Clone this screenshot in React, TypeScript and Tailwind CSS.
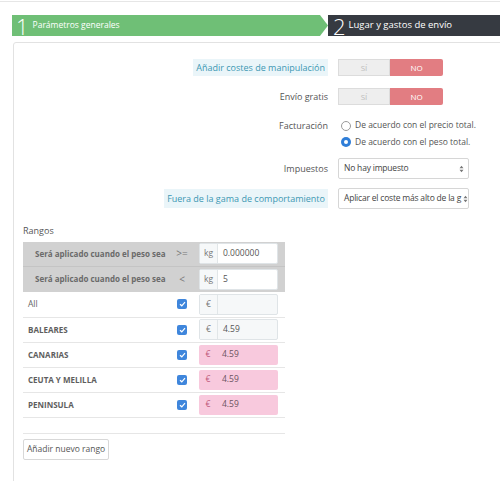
import React from 'react';

const zones = [
  { name: 'BALEARES', price: '4.59', pink: false },
  { name: 'CANARIAS', price: '4.59', pink: true },
  { name: 'CEUTA Y MELILLA', price: '4.59', pink: true },
  { name: 'PENINSULA', price: '4.59', pink: true },
];

function Toggle() {
  return (
    <div className="flex h-[17px] w-[105px] text-[8px]">
      <div className="flex w-[52px] items-center justify-center border border-[#dcdcdc] bg-[#eeeeee] text-[#bdbdbd]">SÍ</div>
      <div className="flex flex-1 items-center justify-center rounded-r-[2px] bg-[#e27d82] text-white">NO</div>
    </div>
  );
}

function Radio({ checked }: { checked?: boolean }) {
  return checked ? (
    <span className="flex h-[10px] w-[10px] items-center justify-center rounded-full bg-[#2f7ed8]">
      <span className="h-[4px] w-[4px] rounded-full bg-white" />
    </span>
  ) : (
    <span className="h-[10px] w-[10px] rounded-full border border-[#9a9a9a] bg-white" />
  );
}

function Select({ value }: { value: string }) {
  return (
    <div className="flex h-[21px] w-[131px] items-center overflow-hidden rounded-[2px] border border-[#d6d6d6] bg-white pl-[5px] pr-[4px] text-[8.5px] text-[#444]">
      <span className="flex-1 whitespace-nowrap tracking-[-0.2px]">{value}</span>
      <svg width="5" height="8" viewBox="0 0 5 8" className="ml-[2px] shrink-0">
        <path d="M0.5 3.2 L2.5 0.8 L4.5 3.2 Z M0.5 4.8 L2.5 7.2 L4.5 4.8 Z" fill="#777" />
      </svg>
    </div>
  );
}

function InputGroup({ unit, value, pink, bg = 'bg-white' }: { unit: string; value: string; pink?: boolean; bg?: string }) {
  if (pink) {
    return (
      <div className="flex h-[20px] w-[79px] items-center rounded-[2px] bg-[#f8c9dd] text-[8.5px]">
        <span className="w-[18px] text-center text-[#c05a7c]">{unit}</span>
        <span className="pl-[5px] text-[#6b5360]">{value}</span>
      </div>
    );
  }
  return (
    <div className={`flex h-[21px] w-[79px] items-stretch rounded-[2px] border border-[#dfe4e7] ${bg} text-[8.5px]`}>
      <span className="flex w-[18px] items-center justify-center border-r border-[#e1e6e8] bg-[#f6f8f9] text-[#777]">{unit}</span>
      <span className="flex items-center pl-[5px] text-[#555]">{value}</span>
    </div>
  );
}

function Check() {
  return (
    <span className="flex h-[10px] w-[10px] items-center justify-center rounded-[2px] bg-[#3f86dc]">
      <svg width="7" height="6" viewBox="0 0 7 6">
        <path d="M1 3.2 L2.8 4.8 L6 1.2" stroke="white" strokeWidth="1.2" fill="none" />
      </svg>
    </span>
  );
}

export default function App() {
  return (
    <div className="relative h-[481px] w-[500px] overflow-hidden bg-white font-['Open_Sans',sans-serif]">
      <div className="mt-[1px] h-[1px] bg-[#e6e6e6]" />

      {/* Steps */}
      <div className="ml-[12px] mt-[13px] flex h-[21px]">
        <div className="flex w-[308px] items-center bg-[#6fbf76] pl-[4px] text-white">
          <span className="text-[22px] font-light leading-none">1</span>
          <span className="ml-[4px] text-[8.5px]">Parámetros generales</span>
        </div>
        <svg width="8" height="21" viewBox="0 0 8 21" className="shrink-0">
          <path d="M0 0 L8 10.5 L0 21 Z" fill="#6fbf76" />
        </svg>
        <div className="flex flex-1 items-center bg-[#363a41] pl-[5px] text-white">
          <span className="text-[22px] font-light leading-none">2</span>
          <span className="ml-[3px] text-[9.5px]">Lugar y gastos de envío</span>
        </div>
      </div>

      {/* Card */}
      <div className="ml-[13px] mt-[6px] h-[520px] w-[520px] rounded-[3px] border border-[#e2e2e2] pt-[16px]">
        <div className="grid grid-cols-[314px_1fr] items-center gap-x-[10px] text-[9px] text-[#555]">
          <div className="flex justify-end">
            <span className="flex h-[17px] items-center bg-[#eaf5f9] px-[3px] text-[#3d98b3]">Añadir costes de manipulación</span>
          </div>
          <Toggle />

          <div className="mt-[12px] text-right">Envío gratis</div>
          <div className="mt-[12px]"><Toggle /></div>

          <div className="mt-[14px] text-right">Facturación</div>
          <div className="mt-[14px] flex items-center gap-[4px] pl-[3px] text-[8.5px]">
            <Radio />
            <span>De acuerdo con el precio total.</span>
          </div>
          <div />
          <div className="mt-[3px] flex items-center gap-[4px] pl-[3px] text-[8.5px]">
            <Radio checked />
            <span>De acuerdo con el peso total.</span>
          </div>

          <div className="mt-[10px] text-right">Impuestos</div>
          <div className="mt-[10px]"><Select value="No hay impuesto" /></div>

          <div className="mt-[9px] flex justify-end">
            <span className="flex h-[19px] items-center bg-[#eaf5f9] px-[3px] text-[#3d98b3]">Fuera de la gama de comportamiento</span>
          </div>
          <div className="mt-[9px]"><Select value="Aplicar el coste más alto de la g" /></div>
        </div>

        {/* Rangos */}
        <div className="ml-[9px] mt-[15px] w-[262px]">
          <div className="text-[9px] text-[#555]">Rangos</div>
          <div className="mt-[4px] bg-[#d1d1d1]">
            {[
              { op: '>=', value: '0.000000' },
              { op: '<', value: '5' },
            ].map((r, i) => (
              <div key={i} className={`grid h-[25px] grid-cols-[147px_24px_5px_79px] items-center ${i === 0 ? 'border-b border-[#c4c4c4]' : ''}`}>
                <span className="whitespace-nowrap pl-[12px] text-[8px] font-bold text-[#6a6a6a]">Será aplicado cuando el peso sea</span>
                <span className="text-center text-[10px] text-[#777]">{r.op}</span>
                <span />
                <InputGroup unit="kg" value={r.value} />
              </div>
            ))}
          </div>

          <div className="grid h-[26px] grid-cols-[147px_24px_5px_79px] items-center border-b border-[#e6e6e6]">
            <span className="pl-[5px] text-[8.5px] text-[#666]">All</span>
            <span className="flex justify-center"><Check /></span>
            <span />
            <InputGroup unit="€" value="" bg="bg-[#f6f8f9]" />
          </div>
          {zones.map((z) => (
            <div key={z.name} className="grid h-[25px] grid-cols-[147px_24px_5px_79px] items-center border-b border-[#e6e6e6]">
              <span className="pl-[5px] text-[8px] font-bold text-[#5e5e5e]">{z.name}</span>
              <span className="flex justify-center"><Check /></span>
              <span />
              <InputGroup unit="€" value={z.price} pink={z.pink} bg="bg-[#f6f8f9]" />
            </div>
          ))}
          <div className="h-[16px] border-b border-[#e6e6e6]" />

          <button className="mt-[4px] h-[21px] w-[86px] rounded-[2px] border border-[#d8d8d8] bg-white text-[8.5px] text-[#555]">
            Añadir nuevo rango
          </button>
        </div>
      </div>
    </div>
  );
}
